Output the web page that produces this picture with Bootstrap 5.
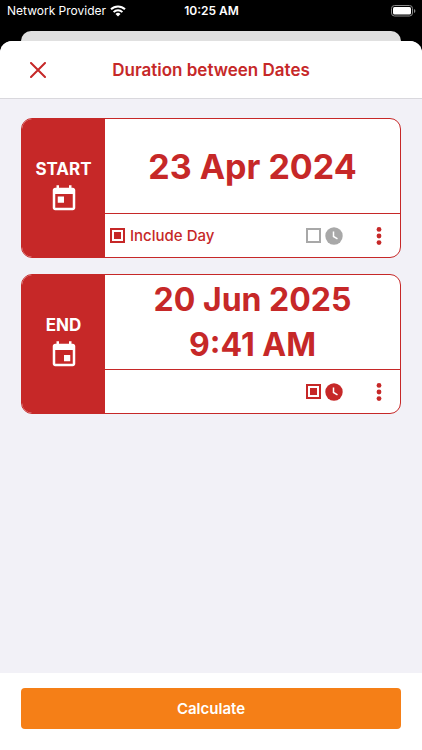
<!DOCTYPE html>
<html lang="en">
<head>
<meta charset="utf-8">
<meta name="viewport" content="width=device-width, initial-scale=1">
<title>Duration between Dates</title>
<link href="https://cdn.jsdelivr.net/npm/bootstrap@5.3.0/dist/css/bootstrap.min.css" rel="stylesheet">
<style>
  :root { --brand: #c62828; --muted: #a8a8a8; }
  body { font-family: Inter, "Liberation Sans", sans-serif; background: #000; }
  svg { display: block; fill: currentColor; }
  .status-bar { display: grid; grid-template-columns: 1fr auto 1fr; height: 22px; font-size: 12px; line-height: 22px; padding: 0 6px 0 7px; }
  .back-sheet { height: 10px; margin: 9px 21px 0; background: #e0e0e0; border-radius: 10px 10px 0 0; }
  .sheet { background: #f2f1f7; border-radius: 12px 12px 0 0; overflow: hidden; }
  .title-bar { display: grid; grid-template-columns: 56px 1fr 56px; height: 58px; border-bottom: 1px solid #d9d8dd; padding: 0 10px; }
  .title-bar h1 { font-size: 17px; line-height: 22px; }
  .brand { color: var(--brand); }
  .page-body { padding: 19px 21px; gap: 16px; }
  .date-card { border: 1px solid var(--brand); border-radius: 11px; overflow: hidden; min-height: 140px; }
  .date-side { width: 83px; background: var(--brand); font-size: 17px; line-height: 22px; padding-bottom: 4px; }
  .date-value { font-size: 34px; line-height: 45px; min-height: 94px; }
  .date-value.with-time { font-size: 32px; }
  .date-options { height: 44px; border-top: 1px solid var(--brand); padding: 0 9px 0 5px; font-size: 15px; }
  .option-text { padding-top: 2px; margin-left: 5px; }
  .tick { appearance: none; width: 15px; height: 15px; margin: 0; border: 2px solid var(--muted); background: #fff; flex: none; }
  .tick:checked { border-color: var(--brand); background: var(--brand); background-clip: content-box; padding: 2px; }
  .clock { color: var(--muted); }
  .tick:checked + .clock { color: var(--brand); }
  .menu-btn { margin-left: 24px; width: 24px; height: 32px; }
  .action-bar { padding: 15px 21px 21px; }
  .btn-calc { --bs-btn-bg: #f57f17; --bs-btn-color: #fff; --bs-btn-hover-bg: #e57310; --bs-btn-hover-color: #fff; height: 41px; border-radius: 4px; font-size: 15px; border: 0; padding: 8px 12px 6px; }
</style>
<script src="https://cdn.jsdelivr.net/npm/bootstrap@5.3.0/dist/js/bootstrap.bundle.min.js" defer></script>
</head>
<body class="d-flex flex-column min-vh-100">
  <div class="status-bar text-white">
    <div class="d-flex align-items-center gap-1">
      <span>Network Provider</span>
      <svg width="16" height="12" viewBox="0 0 16 12" aria-hidden="true"><g fill="none" stroke="currentColor" stroke-width="2"><path d="M1 4.3a10 10 0 0 1 14 0"/><path d="M3.6 7.1a6.3 6.3 0 0 1 8.8 0"/></g><path d="M8 11.6 5.5 9a3.6 3.6 0 0 1 5 0z"/></svg>
    </div>
    <span class="fw-semibold">10:25 AM</span>
    <div class="d-flex align-items-center justify-content-end">
      <svg width="25" height="12" viewBox="0 0 25 12" aria-hidden="true"><rect x=".5" y=".5" width="21" height="10.5" rx="3" fill="none" stroke="#8a8a8a"/><rect x="2" y="2" width="18" height="7.5" rx="1.5"/><path d="M23 4v4q1.4-.6 1.4-2T23 4z" fill="#8a8a8a"/></svg>
    </div>
  </div>
  <div class="back-sheet"></div>

  <div class="sheet flex-grow-1 d-flex flex-column">
    <header class="title-bar bg-white align-items-center brand">
      <button type="button" class="btn border-0 p-0 brand d-flex align-items-center justify-content-center h-100" aria-label="Close">
        <svg width="16" height="16" viewBox="0 0 16 16"><path d="M1 1l14 14M15 1 1 15" fill="none" stroke="currentColor" stroke-width="2" stroke-linecap="round"/></svg>
      </button>
      <h1 class="m-0 text-center fw-semibold">Duration between Dates</h1>
    </header>

    <main class="page-body flex-grow-1 d-flex flex-column">
      <section class="date-card bg-white d-flex">
        <div class="date-side text-white fw-bold d-flex flex-column align-items-center justify-content-center gap-1">
          <span>START</span>
          <svg width="30" height="30" viewBox="0 0 24 24" aria-hidden="true"><path d="M19 3h-1V1h-2v2H8V1H6v2H5c-1.1 0-2 .9-2 2v14c0 1.1.9 2 2 2h14c1.1 0 2-.9 2-2V5c0-1.1-.9-2-2-2zm0 16H5V8h14v11zM7 10h5v5H7z"/></svg>
        </div>
        <div class="flex-grow-1 d-flex flex-column">
          <button type="button" class="date-value btn border-0 rounded-0 p-0 brand fw-bold flex-grow-1">23 Apr 2024</button>
          <div class="date-options d-flex align-items-center">
            <input class="tick" type="checkbox" id="include-start" checked>
            <label class="option-text brand fw-medium me-auto" for="include-start">Include Day</label>
            <input class="tick" type="checkbox" id="start-time" aria-label="Start time">
            <label class="clock ms-1" for="start-time"><svg width="18" height="18" viewBox="0 0 18 18"><circle cx="9" cy="9" r="8.7"/><path d="M8.5 4.5v5l4 2.3" fill="none" stroke="#fff" stroke-width="1.5"/></svg></label>
            <button type="button" class="menu-btn btn border-0 p-0 brand d-flex align-items-center justify-content-center" aria-label="Start options"><svg width="6" height="20" viewBox="0 0 6 20"><circle cx="3" cy="3.4" r="2.4"/><circle cx="3" cy="10" r="2.4"/><circle cx="3" cy="16.6" r="2.4"/></svg></button>
          </div>
        </div>
      </section>

      <section class="date-card bg-white d-flex">
        <div class="date-side text-white fw-bold d-flex flex-column align-items-center justify-content-center gap-1">
          <span>END</span>
          <svg width="30" height="30" viewBox="0 0 24 24" aria-hidden="true"><path d="M17 12h-5v5h5v-5zM16 1v2H8V1H6v2H5c-1.1 0-2 .9-2 2v14c0 1.1.9 2 2 2h14c1.1 0 2-.9 2-2V5c0-1.1-.9-2-2-2h-1V1h-2zm3 18H5V8h14v11z"/></svg>
        </div>
        <div class="flex-grow-1 d-flex flex-column">
          <button type="button" class="date-value with-time btn border-0 rounded-0 p-0 brand fw-bold flex-grow-1">20 Jun 2025<br>9:41 AM</button>
          <div class="date-options d-flex align-items-center justify-content-end">
            <input class="tick" type="checkbox" id="end-time" aria-label="End time" checked>
            <label class="clock ms-1" for="end-time"><svg width="18" height="18" viewBox="0 0 18 18"><circle cx="9" cy="9" r="8.7"/><path d="M8.5 4.5v5l4 2.3" fill="none" stroke="#fff" stroke-width="1.5"/></svg></label>
            <button type="button" class="menu-btn btn border-0 p-0 brand d-flex align-items-center justify-content-center" aria-label="End options"><svg width="6" height="20" viewBox="0 0 6 20"><circle cx="3" cy="3.4" r="2.4"/><circle cx="3" cy="10" r="2.4"/><circle cx="3" cy="16.6" r="2.4"/></svg></button>
          </div>
        </div>
      </section>
    </main>

    <footer class="action-bar bg-white">
      <button type="button" class="btn btn-calc w-100 fw-semibold">Calculate</button>
    </footer>
  </div>
</body>
</html>
